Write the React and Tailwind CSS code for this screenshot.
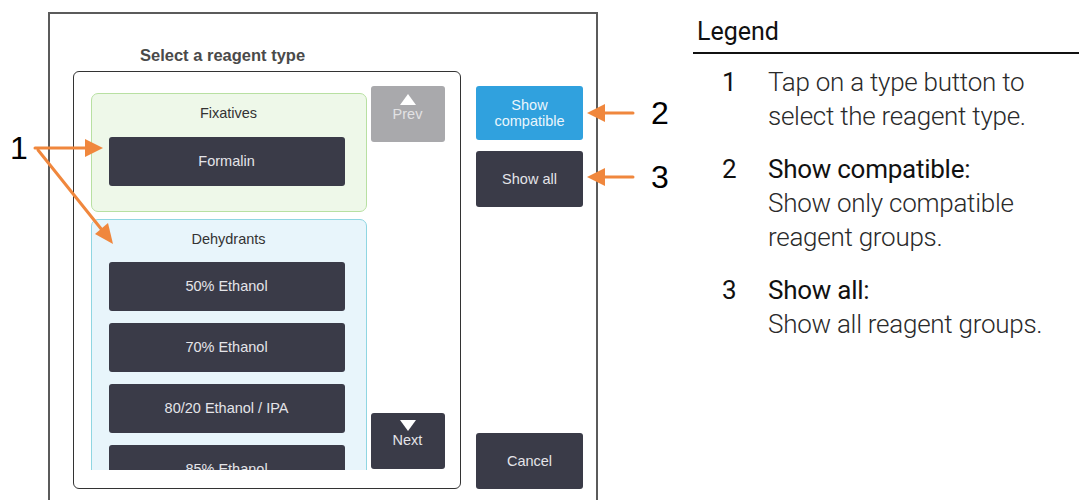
import React from 'react';

const arial = { fontFamily: '"Liberation Sans", Arial, sans-serif' };

const DarkButton = ({ children, className = '' }) => (
  <div
    className={`flex items-center justify-center rounded-[3px] bg-[#3a3b48] text-[14.5px] leading-[16px] text-[#e4e4e8] text-center ${className}`}
  >
    {children}
  </div>
);

const Group = ({ title, tone, children, className = '' }) => (
  <div className={`shrink-0 rounded-[7px] border ${tone} ${className}`}>
    <div className="pt-[11px] text-center text-[14.5px] leading-[16px] text-[#333]">{title}</div>
    <div className="flex flex-col gap-[12px] pl-[17px]">{children}</div>
  </div>
);

const LegendItem = ({ num, heading, lines }) => (
  <li className="flex">
    <span className="w-[46px] shrink-0 font-normal text-[#111]">{num}</span>
    <div className="flex flex-col">
      {heading && <span className="font-normal text-[#111]">{heading}</span>}
      {lines.map((l) => (
        <span key={l}>{l}</span>
      ))}
    </div>
  </li>
);

const Arrows = () => (
  <svg className="absolute inset-0 pointer-events-none" width="1079" height="500" viewBox="0 0 1079 500">
    <g stroke="#f0873d" strokeWidth="3" fill="none" strokeLinecap="round">
      <line x1="35" y1="148" x2="88" y2="148" />
      <line x1="38" y1="150" x2="102" y2="230" />
      <line x1="633" y1="113" x2="602" y2="113" />
      <line x1="633" y1="177" x2="602" y2="177" />
    </g>
    <g fill="#f0873d">
      <polygon points="103,148 85,139 85,157" />
      <polygon points="113,244 95,234 108,223" />
      <polygon points="587,113 605,104 605,122" />
      <polygon points="587,177 605,168 605,186" />
    </g>
  </svg>
);

export default function App() {
  return (
    <div className="relative flex h-[500px] w-[1079px] overflow-hidden bg-white" style={arial}>
      {/* device screen */}
      <div className="w-[693px] shrink-0 pl-[48px] pt-[12px]">
        <div className="h-[520px] w-[550px] border-2 border-b-0 border-[#5b5b5b] bg-white">
          <div className="pl-[90px] pt-[31px] text-[16.5px] font-bold leading-[20px] text-[#4a4a4a]">
            Select a reagent type
          </div>
          <div className="ml-[23px] mt-[6px] flex">
            <div className="flex h-[418px] w-[388px] shrink-0 items-start rounded-[6px] border-[1.5px] border-[#333] pl-[16.5px] pt-[13.5px]">
              <div className="mt-[7px] flex h-[377px] w-[276px] shrink-0 flex-col gap-[7px] overflow-hidden">
                <Group title="Fixatives" tone="h-[119px] border-[#b8e0a2] bg-[#eef8e9]">
                  <DarkButton className="mt-[16px] h-[49px] w-[236px]">Formalin</DarkButton>
                </Group>
                <Group title="Dehydrants" tone="h-[300px] border-[#8fd6e2] bg-[#e8f5fb]">
                  <DarkButton className="mt-[15px] h-[49px] w-[236px]">50% Ethanol</DarkButton>
                  <DarkButton className="h-[49px] w-[236px]">70% Ethanol</DarkButton>
                  <DarkButton className="h-[49px] w-[236px]">80/20 Ethanol / IPA</DarkButton>
                  <DarkButton className="h-[49px] w-[236px]">85% Ethanol</DarkButton>
                </Group>
              </div>
              <div className="ml-[4px] flex h-[383px] w-[74px] flex-col justify-between">
                <div className="flex h-[56px] flex-col items-center rounded-[3px] bg-[#a9a9ac] pt-[8px] text-[14.5px] leading-[16px] text-[#e2e2e4]">
                  <span className="h-0 w-0 border-x-[8px] border-b-[11px] border-x-transparent border-b-white" />
                  <span className="mt-[1px]">Prev</span>
                </div>
                <div className="flex h-[56px] flex-col items-center rounded-[3px] bg-[#3a3b48] pt-[7px] text-[14.5px] leading-[16px] text-[#e4e4e8]">
                  <span className="h-0 w-0 border-x-[8px] border-t-[11px] border-x-transparent border-t-white" />
                  <span className="mt-[1px]">Next</span>
                </div>
              </div>
            </div>
            <div className="ml-[15px] mt-[15px] flex h-[403px] w-[107px] flex-col">
              <div className="flex h-[54px] items-center justify-center rounded-[3px] bg-[#30a1de] text-center text-[14.5px] leading-[16px] text-[#eaf6fc]">
                Show
                <br />
                compatible
              </div>
              <DarkButton className="mt-[11px] h-[56px]">Show all</DarkButton>
              <DarkButton className="mt-auto h-[56px]">Cancel</DarkButton>
            </div>
          </div>
        </div>
      </div>

      {/* legend */}
      <div className="flex-1" style={{ fontFamily: 'Roboto, "Noto Sans", sans-serif' }}>
        <div className="border-b-2 border-[#111] pb-[5px] pl-[4px] pt-[17px] text-[25px] leading-[30px] text-[#111]">
          Legend
        </div>
        <ul className="mt-[11px] flex flex-col gap-[19px] pl-[29px] text-[26px] font-light leading-[34px] tracking-[-0.01em] text-[#2a2a2a]">
          <LegendItem num="1" lines={['Tap on a type button to', 'select the reagent type.']} />
          <LegendItem num="2" heading="Show compatible:" lines={['Show only compatible', 'reagent groups.']} />
          <LegendItem num="3" heading="Show all:" lines={['Show all reagent groups.']} />
        </ul>
      </div>

      {/* callouts */}
      <Arrows />
      <span className="absolute left-[10px] top-[130px] text-[32px] leading-[36px] text-black">1</span>
      <span className="absolute left-[651px] top-[95px] text-[32px] leading-[36px] text-black">2</span>
      <span className="absolute left-[651px] top-[159px] text-[32px] leading-[36px] text-black">3</span>
    </div>
  );
}
